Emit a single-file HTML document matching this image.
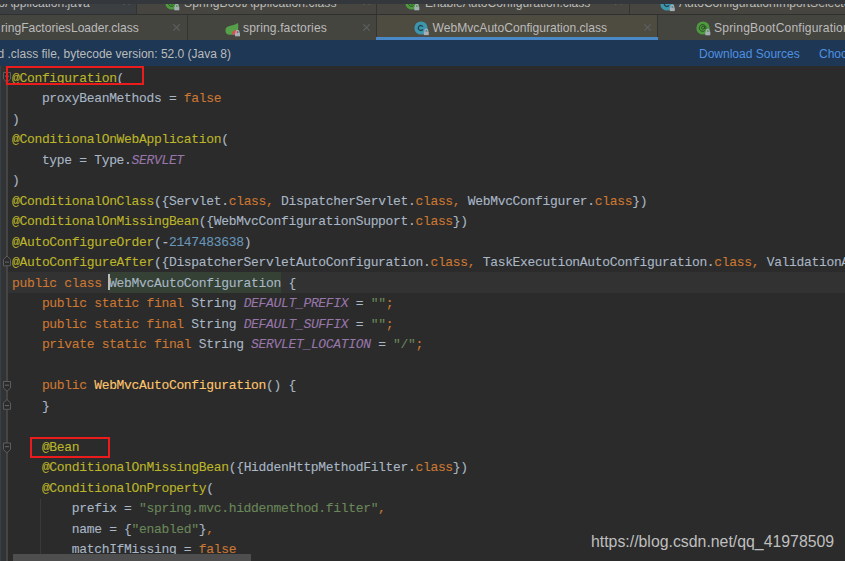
<!DOCTYPE html>
<html><head><meta charset="utf-8">
<style>
*{margin:0;padding:0;box-sizing:border-box}
html,body{width:845px;height:561px;overflow:hidden;background:#2b2b2b}
body{position:relative;font-family:"Liberation Sans",sans-serif}
.abs{position:absolute}
#row1{left:0;top:0;width:845px;height:14px;background:#3c3f41;overflow:hidden}
#rowb{left:0;top:14px;width:845px;height:1px;background:#2f2f2f}
#row2{left:0;top:14px;width:845px;height:26px;background:#454540;overflow:hidden}
.sep{position:absolute;top:0;width:1.2px;height:100%;background:#333333}
.tt{position:absolute;white-space:nowrap;font-size:12.1px;line-height:14px;color:#bbbbbb}
.x{position:absolute;color:#6e7072;font-size:13px}
#info{left:0;top:40.4px;width:845px;height:25.6px;background:#1d3755}
#info .t{position:absolute;top:6.9px;font-size:12px;color:#bbbbbb;white-space:nowrap}
#info .lnk{color:#5091e2}
#gutter{left:0;top:66px;width:8px;height:495px;background:#313335}
#gl{left:6px;top:66px;width:2px;height:495px;background:#454545}
#code{-webkit-text-stroke:0.1px;left:12px;top:68.5px;font-family:"Liberation Mono",monospace;font-size:13px;letter-spacing:-0.33px;color:#a9b7c6}
.ln{height:20.5px;line-height:20.5px;position:relative;white-space:pre;transform:scaleY(1.05);transform-origin:0 14.5px}
.a{color:#bbb529}.k{color:#cc7832}.s{color:#6a8759}.n{color:#6897bb}.f{color:#9876aa;font-style:italic}.m{color:#ffc66d}
#cur{left:8px;top:272px;width:837px;height:20.5px;background:#323232}
#idh{left:109px;top:272px;width:172px;height:20.5px;background:#344134}
#caret{left:108px;top:274px;width:2px;height:16px;background:#bbbbbb}
.box{position:absolute;border:2px solid #ec1c1c}
#wm{left:591px;top:533px;font-size:15.85px;color:#bfbfbf;white-space:nowrap}
#hscroll{left:13px;top:554px;width:238px;height:7px;background:#4e4e4e}
</style></head><body>
<div id="row1" class="abs">
  <div class="abs" style="left:137px;top:0;width:708px;height:14px;background:#46453f"></div>
  <div class="tt" style="left:-1.7px;top:-4px">oApplication.java</div>
  <svg class="abs" style="left:122.5px;top:-2.0px" width="7" height="7"><path d="M0.3 0.3L6.7 6.7M6.7 0.3L0.3 6.7" stroke="#5c6164" stroke-width="1.1"/></svg>
  <div class="sep" style="left:136px"></div>
  <svg class="abs" style="left:164.5px;top:-4px;overflow:visible" width="16" height="16"><circle cx="7" cy="7" r="6.6" fill="#4e9b3f"/><circle cx="7" cy="6.6" r="1.5" fill="none" stroke="#2d4a27" stroke-width="1"/><path d="M8.5 5.5V7.4a1 1 0 0 0 1.5 0.2A3.4 3.4 0 1 0 8.8 9.6" fill="none" stroke="#2d4a27" stroke-width="1"/><g transform="translate(9.3,7.6)"><path d="M1.1 3.4V2.1a1.4 1.4 0 0 1 2.8 0V3.4" fill="none" stroke="#a7afb6" stroke-width="1.2"/><rect x="0" y="3.2" width="5" height="3.5" fill="#a7afb6"/></g></svg>
  <div class="tt" style="left:184px;top:-4px;letter-spacing:0.1px">SpringBootApplication.class</div>
  <svg class="abs" style="left:362.5px;top:-2.0px" width="7" height="7"><path d="M0.3 0.3L6.7 6.7M6.7 0.3L0.3 6.7" stroke="#5c6164" stroke-width="1.1"/></svg>
  <div class="sep" style="left:376px"></div>
  <svg class="abs" style="left:404.5px;top:-3.7px;overflow:visible" width="16" height="16"><circle cx="7" cy="7" r="6.6" fill="#4e9b3f"/><circle cx="7" cy="6.6" r="1.5" fill="none" stroke="#2d4a27" stroke-width="1"/><path d="M8.5 5.5V7.4a1 1 0 0 0 1.5 0.2A3.4 3.4 0 1 0 8.8 9.6" fill="none" stroke="#2d4a27" stroke-width="1"/><g transform="translate(9.3,7.6)"><path d="M1.1 3.4V2.1a1.4 1.4 0 0 1 2.8 0V3.4" fill="none" stroke="#a7afb6" stroke-width="1.2"/><rect x="0" y="3.2" width="5" height="3.5" fill="#a7afb6"/></g></svg>
  <div class="tt" style="left:425px;top:-4px">EnableAutoConfiguration.class</div>
  <svg class="abs" style="left:615.3px;top:-2.0px" width="7" height="7"><path d="M0.3 0.3L6.7 6.7M6.7 0.3L0.3 6.7" stroke="#5c6164" stroke-width="1.1"/></svg>
  <div class="sep" style="left:629.2px"></div>
  <svg class="abs" style="left:659.8px;top:-2.8px;overflow:visible" width="16" height="16"><circle cx="7" cy="7" r="6.6" fill="#3c97ae"/><path d="M8.9 5.6A2.5 2.5 0 1 0 8.9 8.4" fill="none" stroke="#21404c" stroke-width="1.3"/><g transform="translate(9.8,7.4)"><path d="M1.1 3.4V2.1a1.4 1.4 0 0 1 2.8 0V3.4" fill="none" stroke="#a7afb6" stroke-width="1.2"/><rect x="0" y="3.2" width="5" height="3.5" fill="#a7afb6"/></g></svg>
  <div class="tt" style="left:679px;top:-4px">AutoConfigurationImportSelector</div>
  <div class="abs" style="left:0;top:0;width:845px;height:3.5px;background:#34383c"></div>
</div>
<div id="row2" class="abs">
  <div class="tt" style="left:1px;top:7px">ringFactoriesLoader.class</div>
  <svg class="abs" style="left:173.0px;top:10.2px" width="7" height="7"><path d="M0.3 0.3L6.7 6.7M6.7 0.3L0.3 6.7" stroke="#5c6164" stroke-width="1.1"/></svg>
  <div class="sep" style="left:187px"></div>
  <svg class="abs" style="left:224.5px;top:8.5px;overflow:visible" width="16" height="15"><path d="M0.5 6.5C1 3.5 4.5 3.2 7.5 2.3C9.8 1.6 11.8 0.8 13 0C13.6 3 13.4 7.2 12 9.2C10 11.8 6 12.2 3.2 11.6C1.4 11.2 0.2 9.3 0.5 6.5Z" fill="#55a048"/><path d="M7 9.5L10 6.8L13 7.5L12 11.8L8 12Z" fill="#d94f4f"/><g transform="translate(10,6.6)"><path d="M1.1 3.4V2.1a1.4 1.4 0 0 1 2.8 0V3.4" fill="none" stroke="#a7afb6" stroke-width="1.2"/><rect x="0" y="3.2" width="5" height="3.5" fill="#a7afb6"/></g></svg>
  <div class="tt" style="left:243px;top:7px;letter-spacing:0.12px">spring.factories</div>
  <svg class="abs" style="left:362.5px;top:10.2px" width="7" height="7"><path d="M0.3 0.3L6.7 6.7M6.7 0.3L0.3 6.7" stroke="#5c6164" stroke-width="1.1"/></svg>
  <div class="sep" style="left:376px"></div>
  <div class="abs" style="left:377px;top:0;width:280px;height:26px;background:#4e4b40"></div>
  
  <svg class="abs" style="left:414.2px;top:7.4px;overflow:visible" width="16" height="16"><circle cx="7" cy="7" r="6.6" fill="#3c97ae"/><path d="M8.9 5.6A2.5 2.5 0 1 0 8.9 8.4" fill="none" stroke="#21404c" stroke-width="1.3"/><g transform="translate(9.8,7.4)"><path d="M1.1 3.4V2.1a1.4 1.4 0 0 1 2.8 0V3.4" fill="none" stroke="#a7afb6" stroke-width="1.2"/><rect x="0" y="3.2" width="5" height="3.5" fill="#a7afb6"/></g></svg>
  <div class="tt" style="left:432.5px;top:7px">WebMvcAutoConfiguration.class</div>
  <svg class="abs" style="left:643.5px;top:10.2px" width="7" height="7"><path d="M0.3 0.3L6.7 6.7M6.7 0.3L0.3 6.7" stroke="#5c6164" stroke-width="1.1"/></svg>
  <div class="sep" style="left:657px"></div>
  <svg class="abs" style="left:696.3px;top:7.199999999999999px;overflow:visible" width="16" height="16"><circle cx="7" cy="7" r="6.6" fill="#4e9b3f"/><circle cx="7" cy="6.6" r="1.5" fill="none" stroke="#2d4a27" stroke-width="1"/><path d="M8.5 5.5V7.4a1 1 0 0 0 1.5 0.2A3.4 3.4 0 1 0 8.8 9.6" fill="none" stroke="#2d4a27" stroke-width="1"/><g transform="translate(9.3,7.6)"><path d="M1.1 3.4V2.1a1.4 1.4 0 0 1 2.8 0V3.4" fill="none" stroke="#a7afb6" stroke-width="1.2"/><rect x="0" y="3.2" width="5" height="3.5" fill="#a7afb6"/></g></svg>
  <div class="tt" style="left:714px;top:7px;letter-spacing:0.18px">SpringBootConfiguration</div>
</div>
<div id="rowb" class="abs"></div>
<div class="abs" style="left:376px;top:37.4px;width:281.5px;height:3px;background:#4a88c7"></div>
<div id="info" class="abs">
  <div class="t" style="left:-2.5px">d .class file, bytecode version: 52.0 (Java 8)</div>
  <div class="t lnk" style="left:699px">Download Sources</div>
  <div class="t lnk" style="left:819px">Choose Sources...</div>
</div>
<div id="gutter" class="abs"></div>
<div id="gl" class="abs"></div>
<svg class="abs" style="left:0;top:0" width="14" height="561"><path d="M3.5 72.5H10.5V79L7 82.3L3.5 79Z" fill="#2b2b2b" stroke="#5d5d5d" stroke-width="1"/><path d="M5 76.2H9" stroke="#6a6a6a" stroke-width="1"/><path d="M3.5 265.8H10.5V259.3L7 256.0L3.5 259.3Z" fill="#2b2b2b" stroke="#5d5d5d" stroke-width="1"/><path d="M5 262.1H9" stroke="#6a6a6a" stroke-width="1"/><path d="M3.5 381.5H10.5V388L7 391.3L3.5 388Z" fill="#2b2b2b" stroke="#5d5d5d" stroke-width="1"/><path d="M5 385.2H9" stroke="#6a6a6a" stroke-width="1"/><path d="M3.5 409.3H10.5V402.8L7 399.5L3.5 402.8Z" fill="#2b2b2b" stroke="#5d5d5d" stroke-width="1"/><path d="M5 405.6H9" stroke="#6a6a6a" stroke-width="1"/><path d="M3.5 443.0H10.5V449.5L7 452.8L3.5 449.5Z" fill="#2b2b2b" stroke="#5d5d5d" stroke-width="1"/><path d="M5 446.7H9" stroke="#6a6a6a" stroke-width="1"/></svg>
<div class="abs" style="left:40px;top:498.5px;width:1px;height:63px;background:#393939"></div>
<div class="abs" style="left:0;top:66px;width:1.2px;height:495px;background:#394048"></div>
<div id="cur" class="abs"></div>
<div id="idh" class="abs"></div>
<div id="code" class="abs">
<div class="ln"><span class="a">@Configuration</span>(</div>
<div class="ln">    proxyBeanMethods = <span class="k">false</span></div>
<div class="ln">)</div>
<div class="ln"><span class="a">@ConditionalOnWebApplication</span>(</div>
<div class="ln">    type = Type.<span class="f">SERVLET</span></div>
<div class="ln">)</div>
<div class="ln"><span class="a">@ConditionalOnClass</span>({Servlet.<span class="k">class, </span>DispatcherServlet.<span class="k">class, </span>WebMvcConfigurer.<span class="k">class</span>})</div>
<div class="ln"><span class="a">@ConditionalOnMissingBean</span>({WebMvcConfigurationSupport.<span class="k">class</span>})</div>
<div class="ln"><span class="a">@AutoConfigureOrder</span>(-<span class="n">2147483638</span>)</div>
<div class="ln"><span class="a">@AutoConfigureAfter</span>({DispatcherServletAutoConfiguration.<span class="k">class, </span>TaskExecutionAutoConfiguration.<span class="k">class, </span>ValidationAutoConfiguration.<span class="k">class</span>})</div>
<div class="ln"><span class="k">public class </span>WebMvcAutoConfiguration {</div>
<div class="ln">    <span class="k">public static final </span>String <span class="f">DEFAULT_PREFIX</span> = <span class="s">""</span><span class="k">;</span></div>
<div class="ln">    <span class="k">public static final </span>String <span class="f">DEFAULT_SUFFIX</span> = <span class="s">""</span><span class="k">;</span></div>
<div class="ln">    <span class="k">private static final </span>String <span class="f">SERVLET_LOCATION</span> = <span class="s">"/"</span><span class="k">;</span></div>
<div class="ln"> </div>
<div class="ln">    <span class="k">public </span><span class="m">WebMvcAutoConfiguration</span>() {</div>
<div class="ln">    }</div>
<div class="ln"> </div>
<div class="ln">    <span class="a">@Bean</span></div>
<div class="ln">    <span class="a">@ConditionalOnMissingBean</span>({HiddenHttpMethodFilter.<span class="k">class</span>})</div>
<div class="ln">    <span class="a">@ConditionalOnProperty</span>(</div>
<div class="ln">        prefix = <span class="s">"spring.mvc.hiddenmethod.filter"</span><span class="k">,</span></div>
<div class="ln">        name = {<span class="s">"enabled"</span>}<span class="k">,</span></div>
<div class="ln">        matchIfMissing = <span class="k">false</span></div>
</div>
<div id="caret" class="abs"></div>
<div class="box" style="left:6px;top:66px;width:138px;height:19px"></div>
<div class="box" style="left:30px;top:437px;width:80px;height:21px"></div>
<div id="hscroll" class="abs"></div>
<div id="wm" class="abs">https://blog.csdn.net/qq_41978509</div>
</body></html>
